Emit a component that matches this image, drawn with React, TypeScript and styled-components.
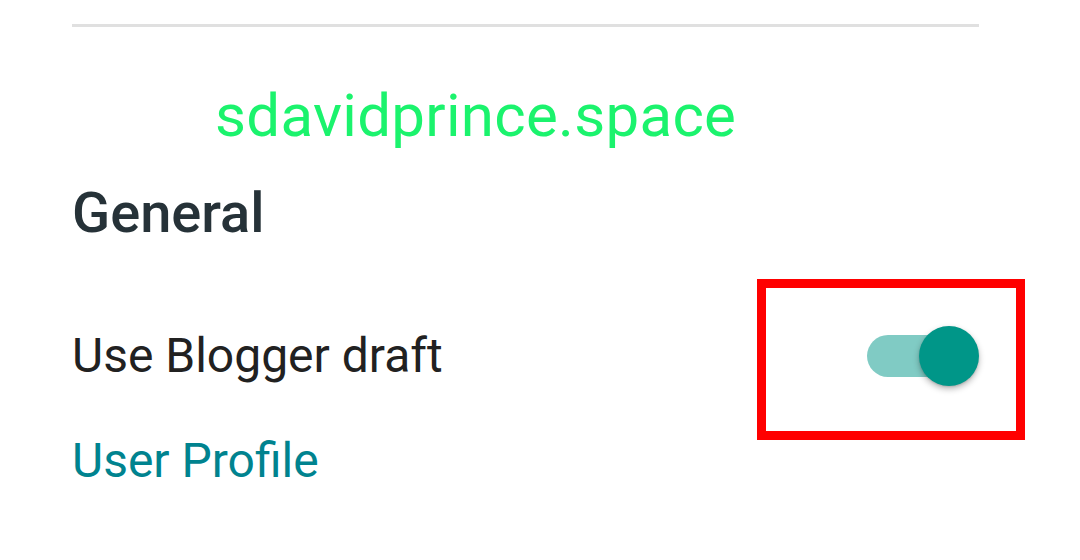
import React from "react";
import styled, { createGlobalStyle } from "styled-components";

const GlobalStyle = createGlobalStyle`
  html, body {
    margin: 0;
    padding: 0;
    background: #fff;
  }
  body {
    font-family: Roboto, "Noto Sans", "Liberation Sans", sans-serif;
    -webkit-font-smoothing: antialiased;
  }
`;

const Page = styled.div`
  width: 1080px;
  height: 560px;
  box-sizing: border-box;
  padding: 24px 101px 0 72px;
  overflow: hidden;
  display: flex;
  flex-direction: column;
`;

const Divider = styled.div`
  height: 3px;
  background: #e0e0e0;
`;

const Watermark = styled.div`
  margin: 53px 0 0 143px;
  font-size: 60px;
  line-height: 72px;
  color: #1bf36d;
  letter-spacing: 0.3px;
`;

const SectionTitle = styled.h2`
  margin: 28px 0 0;
  font-size: 56px;
  line-height: 66px;
  font-weight: 500;
  color: #263238;
`;

const SettingRow = styled.div`
  margin-top: 82px;
  display: flex;
  align-items: center;
  justify-content: space-between;
  height: 56px;
`;

const Label = styled.span`
  font-size: 48px;
  line-height: 56px;
  color: #212121;
`;

const SwitchBox = styled.div`
  position: relative;
  width: 112px;
  height: 60px;
  flex-shrink: 0;
`;

const Track = styled.div<{ $on: boolean }>`
  position: absolute;
  left: 0;
  top: 9px;
  width: 102px;
  height: 42px;
  border-radius: 21px;
  background: ${(p) => (p.$on ? "#80cbc4" : "#bdbdbd")};
`;

const Thumb = styled.div<{ $on: boolean }>`
  position: absolute;
  top: 0;
  ${(p) => (p.$on ? "right: 0;" : "left: 0;")}
  width: 60px;
  height: 60px;
  border-radius: 50%;
  background: ${(p) => (p.$on ? "#009688" : "#fafafa")};
  box-shadow: 0 3px 6px rgba(0, 0, 0, 0.28), 0 1px 2px rgba(0, 0, 0, 0.12);
`;

const Highlight = styled.div`
  position: absolute;
  left: -110px;
  top: -47px;
  width: 268px;
  height: 161px;
  box-sizing: border-box;
  border: 9px solid #ff0000;
  pointer-events: none;
`;

const LinkText = styled.a`
  margin-top: 49px;
  font-size: 48px;
  line-height: 56px;
  color: #00838f;
  text-decoration: none;
  align-self: flex-start;
`;

const Switch = ({ on }: { on: boolean }) => (
  <SwitchBox>
    <Track $on={on} />
    <Thumb $on={on} />
    <Highlight />
  </SwitchBox>
);

export default function App() {
  return (
    <>
      <GlobalStyle />
      <Page>
        <Divider />
        <Watermark>sdavidprince.space</Watermark>
        <SectionTitle>General</SectionTitle>
        <SettingRow>
          <Label>Use Blogger draft</Label>
          <Switch on={true} />
        </SettingRow>
        <LinkText>User Profile</LinkText>
      </Page>
    </>
  );
}
